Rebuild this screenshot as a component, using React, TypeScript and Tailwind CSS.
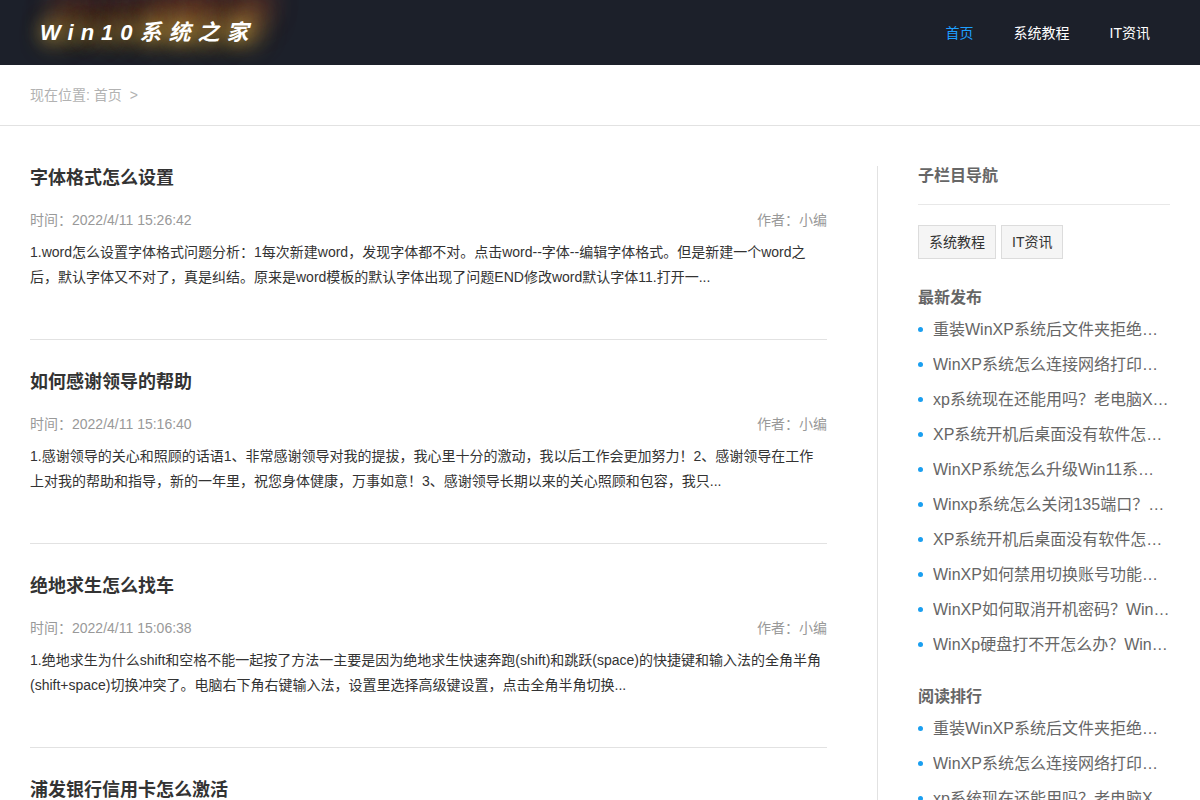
import React from "react";

const navLinks = ["首页", "系统教程", "IT资讯"];

const articles = [
  {
    title: "字体格式怎么设置",
    time: "2022/4/11 15:26:42",
    summary:
      "1.word怎么设置字体格式问题分析：1每次新建word，发现字体都不对。点击word--字体--编辑字体格式。但是新建一个word之后，默认字体又不对了，真是纠结。原来是word模板的默认字体出现了问题END修改word默认字体11.打开一...",
  },
  {
    title: "如何感谢领导的帮助",
    time: "2022/4/11 15:16:40",
    summary:
      "1.感谢领导的关心和照顾的话语1、非常感谢领导对我的提拔，我心里十分的激动，我以后工作会更加努力！2、感谢领导在工作上对我的帮助和指导，新的一年里，祝您身体健康，万事如意！3、感谢领导长期以来的关心照顾和包容，我只...",
  },
  {
    title: "绝地求生怎么找车",
    time: "2022/4/11 15:06:38",
    summary:
      "1.绝地求生为什么shift和空格不能一起按了方法一主要是因为绝地求生快速奔跑(shift)和跳跃(space)的快捷键和输入法的全角半角(shift+space)切换冲突了。电脑右下角右键输入法，设置里选择高级键设置，点击全角半角切换...",
  },
  { title: "浦发银行信用卡怎么激活", time: "", summary: "" },
];

const posts = [
  "重装WinXP系统后文件夹拒绝…",
  "WinXP系统怎么连接网络打印…",
  "xp系统现在还能用吗？老电脑X…",
  "XP系统开机后桌面没有软件怎…",
  "WinXP系统怎么升级Win11系…",
  "Winxp系统怎么关闭135端口？…",
  "XP系统开机后桌面没有软件怎…",
  "WinXP如何禁用切换账号功能…",
  "WinXP如何取消开机密码？Win…",
  "WinXp硬盘打不开怎么办？Win…",
];

function PostList({ title, items }: { title: string; items: string[] }) {
  return (
    <section>
      <h3 className="mb-[3px] text-base leading-[22px] font-bold">{title}</h3>
      <ul>
        {items.map((item, i) => (
          <li key={i} className="flex items-center gap-2.5 leading-[35px]">
            <span className="size-[5px] shrink-0 rounded-full bg-[#1a9ff0]" />
            <a href="#" className="overflow-hidden whitespace-nowrap">
              {item}
            </a>
          </li>
        ))}
      </ul>
    </section>
  );
}

export default function App() {
  return (
    <div className="bg-white font-['Liberation_Sans','Noto_Sans_CJK_SC',sans-serif] text-sm text-[#333]">
      <header className="flex h-[65px] items-center justify-between overflow-hidden bg-[#1c202a] pr-[50px] pl-10">
        <a
          href="#"
          className="text-[22px] leading-8 font-bold tracking-[7px] text-white italic [text-shadow:0_0_18px_rgba(255,215,80,0.6),4px_2px_24px_rgba(255,200,60,0.6),12px_0_28px_rgba(255,190,60,0.4),8px_-12px_26px_rgba(255,160,60,0.55),16px_-20px_30px_rgba(255,120,50,0.6),18px_-32px_30px_rgba(255,90,40,0.6)]"
        >
          Win10系统之家
        </a>
        <nav className="flex gap-10">
          {navLinks.map((link, i) => (
            <a key={link} href="#" className={i === 0 ? "text-[#1e9fff]" : "text-white"}>
              {link}
            </a>
          ))}
        </nav>
      </header>

      <div className="border-b border-[#e2e2e2] px-[30px] leading-[60px] text-[#b2b2b2]">
        现在位置: <a href="#">首页</a>
        <span className="ml-2">&gt;</span>
      </div>

      <div className="flex px-[30px] pt-10">
        <main className="mr-[50px] min-w-0 flex-1">
          {articles.map((article) => (
            <article
              key={article.title}
              className="mb-[30px] border-b border-[#e2e2e2] pb-[49px]"
            >
              <h2 className="mb-[18px] text-lg leading-6 font-bold">
                <a href="#">{article.title}</a>
              </h2>
              {article.summary && (
                <>
                  <div className="mb-2 flex justify-between leading-6 text-[#999]">
                    <span>时间：{article.time}</span>
                    <span>作者：小编</span>
                  </div>
                  <p className="leading-[25px]">{article.summary}</p>
                </>
              )}
            </article>
          ))}
        </main>

        <aside className="w-[293px] shrink-0 border-l border-[#e2e2e2] pl-10 text-base text-[#666]">
          <h3 className="border-b border-[#e8e8e8] pb-[18px] leading-5 font-bold">子栏目导航</h3>
          <div className="mt-5 mb-7 flex gap-[5px] text-sm text-[#333]">
            {navLinks.slice(1).map((link) => (
              <a
                key={link}
                href="#"
                className="border border-[#dcdcdc] bg-[#f5f5f5] px-2.5 leading-8"
              >
                {link}
              </a>
            ))}
          </div>
          <div className="flex flex-col gap-6">
            <PostList title="最新发布" items={posts} />
            <PostList title="阅读排行" items={posts} />
          </div>
        </aside>
      </div>
    </div>
  );
}
